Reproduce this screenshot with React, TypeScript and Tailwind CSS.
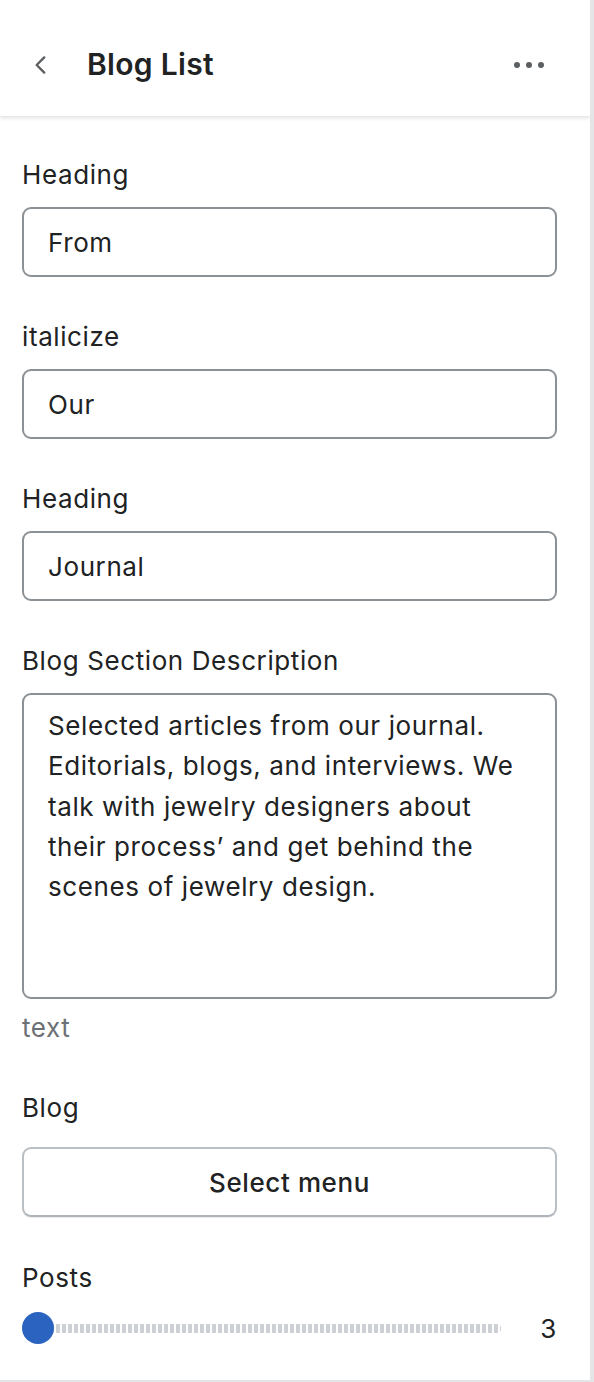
import React from 'react';

function Field({ label, value }: { label: string; value: string }) {
  return (
    <div className="mb-[42px]">
      <div className="h-[36px] leading-[36px] text-[26px] text-[#202223]">{label}</div>
      <div className="mt-[14px] h-[70px] flex items-center px-[24px] border-2 border-[#8c9196] rounded-[9px] text-[26px] text-[#202223]">
        {value}
      </div>
    </div>
  );
}

export default function App() {
  const description =
    'Selected articles from our journal. Editorials, blogs, and interviews. We talk with jewelry designers about their process\u2019 and get behind the scenes of jewelry design.';

  return (
    <div className="w-[594px] h-[1382px] bg-white border-r-4 border-r-[#e4e5e7] border-b-2 border-b-[#e4e5e7] font-['Inter','Noto_Sans',sans-serif] tracking-[0.6px] overflow-hidden">
      {/* Header */}
      <div className="h-[116px] pt-[13px] flex items-center pl-[28px] pr-[46px] shadow-[0_2px_4px_rgba(0,0,0,0.12)] relative">
        <svg width="26" height="26" viewBox="0 0 24 24" fill="none" className="text-[#5c5f62]">
          <path d="M15 5l-7 7 7 7" stroke="currentColor" strokeWidth="2.2" strokeLinecap="round" strokeLinejoin="round" />
        </svg>
        <h1 className="ml-[33px] text-[30px] font-semibold text-[#202223] tracking-[0.3px]">Blog List</h1>
        <div className="ml-auto flex items-center gap-[6px]">
          <span className="w-[6px] h-[6px] rounded-full bg-[#5c5f62]" />
          <span className="w-[6px] h-[6px] rounded-full bg-[#5c5f62]" />
          <span className="w-[6px] h-[6px] rounded-full bg-[#5c5f62]" />
        </div>
      </div>

      {/* Content */}
      <div className="pt-[41px] pl-[22px] pr-[33px]">
        <Field label="Heading" value="From" />
        <Field label="italicize" value="Our" />
        <Field label="Heading" value="Journal" />

        <div>
          <div className="h-[36px] leading-[36px] text-[26px] text-[#202223]">Blog Section Description</div>
          <div className="mt-[14px] h-[306px] px-[24px] pt-[11px] border-2 border-[#8c9196] rounded-[9px] text-[26px] leading-[40.3px] text-[#202223]">
            {description}
          </div>
          <div className="mt-[11px] h-[36px] leading-[36px] text-[26px] text-[#6d7175]">text</div>
        </div>

        <div className="mt-[44px]">
          <div className="h-[36px] leading-[36px] text-[26px] text-[#202223]">Blog</div>
          <button className="mt-[21px] w-full h-[70px] border-2 border-[#babfc3] border-b-[#aeb4b9] rounded-[9px] shadow-[0_1px_0_rgba(0,0,0,0.08)] text-[26px] font-medium text-[#202223] bg-white">
            Select menu
          </button>
        </div>

        <div className="mt-[43px]">
          <div className="h-[36px] leading-[36px] text-[26px] text-[#202223]">Posts</div>
          <div className="mt-[16px] flex items-center h-[32px]">
            <div className="relative flex-1 h-[32px] flex items-center mr-[39px]">
              <div className="w-full ml-[16px] h-[9px] rounded-[4px] bg-[repeating-linear-gradient(90deg,#cdd0d4_0_4px,transparent_4px_6px)]" />
              <div className="absolute left-0 top-0 w-[32px] h-[32px] rounded-full bg-[#2b63c0]" />
            </div>
            <span className="text-[26px] text-[#202223]">3</span>
          </div>
        </div>
      </div>
    </div>
  );
}
